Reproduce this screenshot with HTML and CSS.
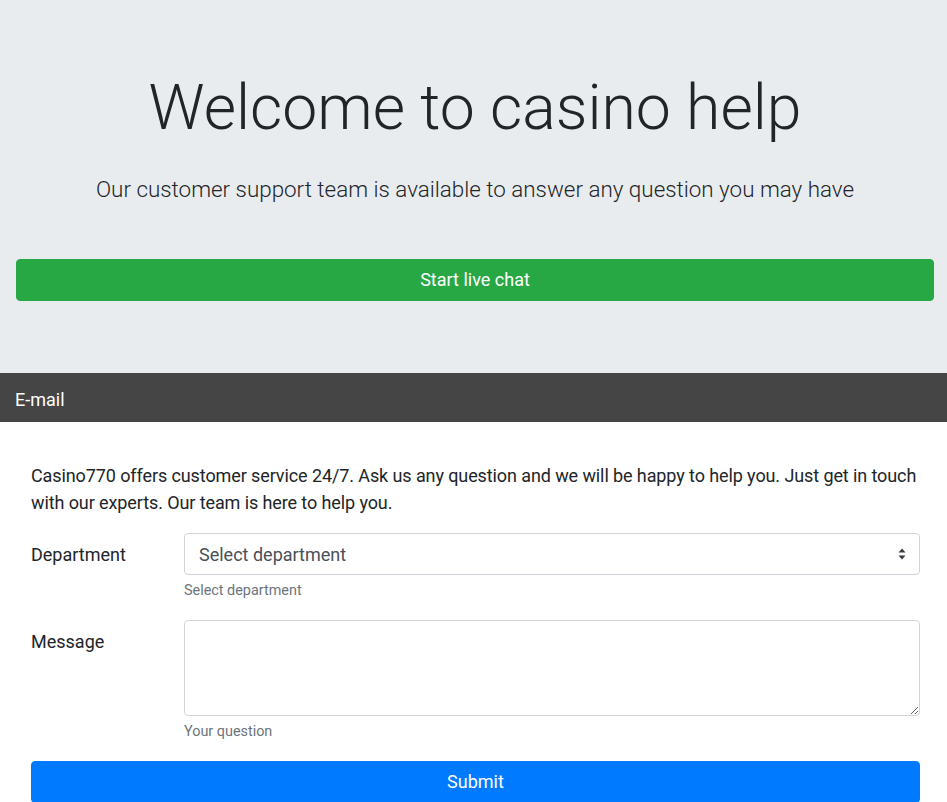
FILE: index.html
```html
<!DOCTYPE html>
<html lang="en">
<head>
<meta charset="utf-8">
<title>Casino help</title>
<link rel="stylesheet" href="styles.css">
</head>
<body>
<section class="hero">
  <h1 class="hero-title">Welcome to casino help</h1>
  <p class="hero-lead">Our customer support team is available to answer any question you may have</p>
  <button class="btn btn-green" type="button">Start live chat</button>
</section>
<section class="mail">
  <div class="mail-head">E-mail</div>
  <div class="mail-body">
    <p class="mail-intro">Casino770 offers customer service 24/7. Ask us any question and we will be happy to help you. Just get in touch with our experts. Our team is here to help you.</p>
    <form class="mail-form">
      <div class="form-row">
        <label class="form-label" for="dep">Department</label>
        <div class="form-field">
          <div class="select-wrap">
            <select id="dep" class="control select">
              <option>Select department</option>
            </select>
            <svg class="select-arrow" width="8" height="12" viewBox="0 0 8 12"><path d="M4 0.5 L7.5 4.5 H0.5 Z M4 11.5 L7.5 7.5 H0.5 Z" fill="#343a40"/></svg>
          </div>
          <small class="help">Select department</small>
        </div>
      </div>
      <div class="form-row">
        <label class="form-label" for="msg">Message</label>
        <div class="form-field">
          <textarea id="msg" class="control textarea"></textarea>
          <small class="help">Your question</small>
        </div>
      </div>
      <button class="btn btn-blue" type="submit">Submit</button>
    </form>
  </div>
</section>
</body>
</html>
```
FILE: styles.css
```css
* { box-sizing: border-box; }
html, body { margin: 0; padding: 0; }
body {
  font-family: Roboto, "Liberation Sans", sans-serif;
  font-size: 18px;
  line-height: 1.5;
  color: #212529;
  background: #fff;
}
.hero {
  background: #e9ecef;
  padding: 70px 13px 72px 16px;
  text-align: center;
}
.hero-title {
  margin: 0;
  font-size: 62.5px;
  font-weight: 300;
  line-height: 1.2;
}
.hero-lead {
  margin: 28px 0 52px;
  font-size: 22.4px;
  font-weight: 300;
  line-height: 1.5;
}
.btn {
  display: block;
  width: 100%;
  border: 1px solid transparent;
  border-radius: 4px;
  color: #fff;
  font-family: inherit;
  font-size: 18px;
  line-height: 1.5;
  padding: 6.5px 12px;
  text-align: center;
  cursor: pointer;
}
.btn-green { background: #28a745; border-color: #28a745; }
.btn-blue { background: #007bff; border-color: #007bff; }
.mail-head {
  background: #454545;
  color: #fff;
  height: 49px;
  padding: 4px 15px 0;
  display: flex;
  align-items: center;
  font-size: 18px;
}
.mail-body {
  padding: 40px 27px 0 31px;
}
.mail-intro {
  margin: 0 0 17px;
  letter-spacing: -0.1px;
}
.form-row {
  display: grid;
  grid-template-columns: 153px 1fr;
  margin-bottom: 18.5px;
}
.form-label {
  padding-top: 8px;
  line-height: 1.5;
}
.form-field { display: flex; flex-direction: column; }
.select-wrap { position: relative; }
.control {
  display: block;
  width: 100%;
  font-family: inherit;
  font-size: 18px;
  line-height: 1.5;
  color: #495057;
  background: #fff;
  border: 1px solid #ced4da;
  border-radius: 4px;
  padding: 6.5px 14px;
}
.select {
  height: 42px;
  appearance: none;
  -webkit-appearance: none;
  padding-right: 32px;
  padding-top: 7.5px;
  padding-bottom: 5.5px;
}
.select-arrow {
  position: absolute;
  right: 14px;
  top: 15px;
}
.textarea {
  height: 96px;
  resize: vertical;
}
.help {
  display: block;
  margin-top: 5px;
  font-size: 14.4px;
  line-height: 1.5;
  color: #6c757d;
}
```
